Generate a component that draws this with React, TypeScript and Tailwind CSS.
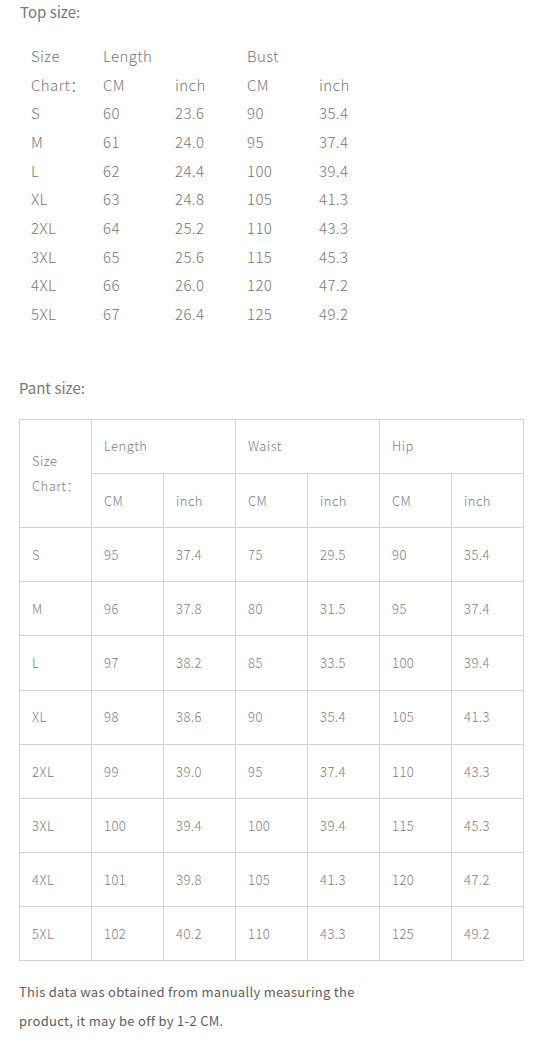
const top = [
  ['S', '60', '23.6', '90', '35.4'],
  ['M', '61', '24.0', '95', '37.4'],
  ['L', '62', '24.4', '100', '39.4'],
  ['XL', '63', '24.8', '105', '41.3'],
  ['2XL', '64', '25.2', '110', '43.3'],
  ['3XL', '65', '25.6', '115', '45.3'],
  ['4XL', '66', '26.0', '120', '47.2'],
  ['5XL', '67', '26.4', '125', '49.2'],
];

const pant = [
  ['S', '95', '37.4', '75', '29.5', '90', '35.4'],
  ['M', '96', '37.8', '80', '31.5', '95', '37.4'],
  ['L', '97', '38.2', '85', '33.5', '100', '39.4'],
  ['XL', '98', '38.6', '90', '35.4', '105', '41.3'],
  ['2XL', '99', '39.0', '95', '37.4', '110', '43.3'],
  ['3XL', '100', '39.4', '100', '39.4', '115', '45.3'],
  ['4XL', '101', '39.8', '105', '41.3', '120', '47.2'],
  ['5XL', '102', '40.2', '110', '43.3', '125', '49.2'],
];

function Cell({ children, className = '' }: { children?: React.ReactNode; className?: string }) {
  return <div className={`bg-white flex items-center pl-[12px] ${className}`}>{children}</div>;
}

export default function App() {
  return (
    <div className="w-[544px] h-[1047px] bg-white text-[#777] font-light font-['Noto_Sans_CJK_SC','Noto_Sans',sans-serif] overflow-hidden">
      <div className="pl-[20px] text-[15px] leading-[24px] font-normal text-[#787878]">Top size:</div>

      {/* top size chart, plain text grid */}
      <div className="mt-[18px] ml-[31px] grid grid-cols-[72px_72px_72px_72px_72px] text-[15px] text-[#777] tracking-[0.4px]">
        {[['Size', 'Length', '', 'Bust', ''], ['Chart：', 'CM', 'inch', 'CM', 'inch'], ...top].map((row, i) =>
          row.map((v, j) => (
            <div key={`${i}-${j}`} className="h-[28.67px] leading-[28.67px]">
              {v}
            </div>
          ))
        )}
      </div>

      <div className="mt-[47px] pl-[19px] text-[15px] leading-[24px] font-normal text-[#787878]">Pant size:</div>

      {/* pant size table */}
      <div className="mt-[19px] ml-[19px] w-[505px] grid grid-cols-[repeat(7,71px)] auto-rows-[53.2px] gap-px p-px bg-[#d2d2d2] text-[13px] text-[#808080] tracking-[0.45px]">
        <Cell className="row-span-2 leading-[25px]">
          <div>
            Size
            <br />
            Chart：
          </div>
        </Cell>
        <Cell className="col-span-2">Length</Cell>
        <Cell className="col-span-2">Waist</Cell>
        <Cell className="col-span-2">Hip</Cell>
        {['CM', 'inch', 'CM', 'inch', 'CM', 'inch'].map((v, i) => (
          <Cell key={`h${i}`}>{v}</Cell>
        ))}
        {pant.map((row, i) =>
          row.map((v, j) => <Cell key={`${i}-${j}`}>{v}</Cell>)
        )}
      </div>

      <div className="mt-[16px] pl-[19px] text-[13px] leading-[29px] font-normal text-[#5e5e5e] tracking-[0.3px]">
        This data was obtained from manually measuring the
        <br />
        product, it may be off by 1-2 CM.
      </div>
    </div>
  );
}
